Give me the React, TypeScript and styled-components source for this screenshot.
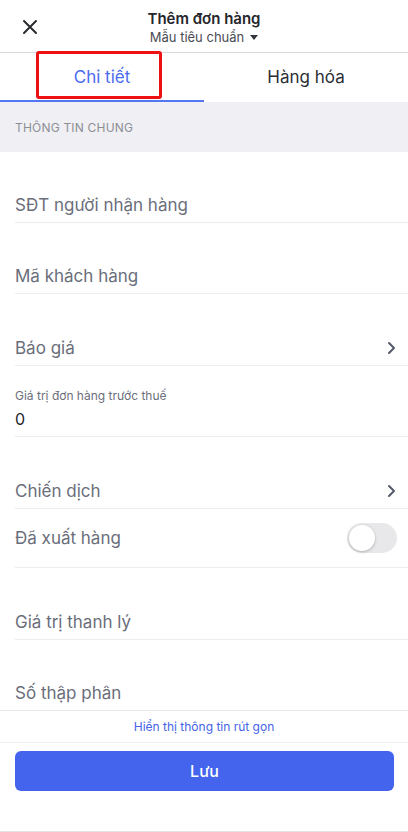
import styled, { createGlobalStyle } from "styled-components";

const Global = createGlobalStyle`
  html, body {
    margin: 0;
    padding: 0;
    background: #fff;
  }
  body {
    font-family: Inter, "Noto Sans", "Liberation Sans", sans-serif;
    -webkit-font-smoothing: antialiased;
  }
  * { box-sizing: border-box; }
`;

const Screen = styled.div`
  width: 408px;
  height: 832px;
  display: flex;
  flex-direction: column;
  background: #fff;
  overflow: hidden;
`;

const Header = styled.div`
  height: 53px;
  flex-shrink: 0;
  display: grid;
  grid-template-columns: 60px 1fr 60px;
  align-items: center;
  border-bottom: 1px solid #d9d9de;
`;

const CloseBtn = styled.div`
  display: flex;
  align-items: center;
  justify-content: center;
  padding-right: 1px;
  padding-top: 1px;
`;

const TitleBox = styled.div`
  display: flex;
  flex-direction: column;
  align-items: center;
  gap: 1px;
  padding-top: 1px;
`;

const Title = styled.div`
  font-size: 15px;
  font-weight: 600;
  color: #25262b;
  line-height: 19px;
`;

const Subtitle = styled.div`
  font-size: 13px;
  color: #4a4c54;
  line-height: 16px;
  display: flex;
  align-items: center;
  gap: 6px;
`;

const Caret = styled.span`
  width: 0;
  height: 0;
  border-left: 4px solid transparent;
  border-right: 4px solid transparent;
  border-top: 5px solid #33353c;
  margin-top: 1px;
`;

const Tabs = styled.div`
  height: 49px;
  flex-shrink: 0;
  display: grid;
  grid-template-columns: 1fr 1fr;
`;

const Tab = styled.div<{ active?: boolean }>`
  display: flex;
  align-items: center;
  justify-content: center;
  font-size: 17px;
  color: ${(p) => (p.active ? "#4a6cf0" : "#2c2e35")};
  border-bottom: 2px solid ${(p) => (p.active ? "#5576f2" : "transparent")};
  position: relative;
  padding-top: 1px;
`;

const Highlight = styled.div`
  position: absolute;
  left: 36px;
  top: -2px;
  width: 126px;
  height: 48px;
  border: 3px solid #ee1111;
  border-radius: 3px;
`;

const SectionHead = styled.div`
  height: 50px;
  flex-shrink: 0;
  background: #f0f0f4;
  display: flex;
  align-items: center;
  padding-left: 15px;
  font-size: 12px;
  color: #8c8e96;
  letter-spacing: 0.2px;
`;

const List = styled.div`
  flex: 1;
  display: flex;
  flex-direction: column;
  padding-left: 15px;
  overflow: hidden;
`;

const Row = styled.div<{ h?: number; center?: boolean }>`
  height: ${(p) => p.h ?? 71}px;
  flex-shrink: 0;
  display: flex;
  align-items: ${(p) => (p.center ? "center" : "flex-end")};
  justify-content: space-between;
  padding-bottom: ${(p) => (p.center ? 0 : 6)}px;
  padding-right: 12px;
  border-bottom: 1px solid #ececf0;
`;

const Line = styled.div`
  flex: 1;
  display: flex;
  align-items: center;
  justify-content: space-between;
`;

const Label = styled.div`
  font-size: 17px;
  color: #6a6e7a;
  line-height: 22px;
`;

const Stack = styled.div`
  display: flex;
  flex-direction: column;
  gap: 5px;
  padding-bottom: 1px;
`;

const SmallLabel = styled.div`
  font-size: 12px;
  color: #6c6f7b;
  line-height: 16px;
`;

const Value = styled.div`
  font-size: 16px;
  color: #24262c;
  line-height: 20px;
`;

const Toggle = styled.div`
  width: 50px;
  height: 30px;
  border-radius: 15px;
  background: #e8e8eb;
  display: flex;
  align-items: center;
  padding: 2px;
  margin-right: -1px;
`;

const Knob = styled.div`
  width: 26px;
  height: 26px;
  border-radius: 50%;
  background: #fff;
  box-shadow: 0 1px 3px rgba(0, 0, 0, 0.25);
`;

const Footer = styled.div`
  flex-shrink: 0;
  border-top: 1px solid #e6e6ea;
  display: flex;
  flex-direction: column;
`;

const LinkRow = styled.div`
  height: 32px;
  display: flex;
  align-items: center;
  justify-content: center;
  font-size: 12px;
  color: #4563e6;
  border-bottom: 1px solid #f0f0f3;
`;

const SaveArea = styled.div`
  height: 89px;
  padding: 8px 14px 0 15px;
  border-bottom: 1px solid #e3e3e7;
`;

const SaveButton = styled.button`
  width: 100%;
  height: 40px;
  border: none;
  border-radius: 6px;
  background: #4464ee;
  color: #fff;
  font-family: inherit;
  font-size: 16px;
  font-weight: 500;
`;

const Chevron = () => (
  <svg width="10" height="14" viewBox="0 0 10 14">
    <path
      d="M3 2 L8 7 L3 12"
      fill="none"
      stroke="#555a68"
      strokeWidth="2"
      strokeLinecap="round"
      strokeLinejoin="round"
    />
  </svg>
);

const CloseIcon = () => (
  <svg width="16" height="16" viewBox="0 0 16 16">
    <path
      d="M2 2 L14 14 M14 2 L2 14"
      stroke="#2a2b30"
      strokeWidth="2"
      strokeLinecap="round"
    />
  </svg>
);

export default function App() {
  return (
    <Screen>
      <Global />
      <Header>
        <CloseBtn>
          <CloseIcon />
        </CloseBtn>
        <TitleBox>
          <Title>Thêm đơn hàng</Title>
          <Subtitle>
            Mẫu tiêu chuẩn <Caret />
          </Subtitle>
        </TitleBox>
        <div />
      </Header>
      <Tabs>
        <Tab active>
          <Highlight />
          Chi tiết
        </Tab>
        <Tab>Hàng hóa</Tab>
      </Tabs>
      <SectionHead>THÔNG TIN CHUNG</SectionHead>
      <List>
        <Row h={71}>
          <Label>SĐT người nhận hàng</Label>
        </Row>
        <Row h={71}>
          <Label>Mã khách hàng</Label>
        </Row>
        <Row h={72}>
          <Line>
            <Label>Báo giá</Label>
            <Chevron />
          </Line>
        </Row>
        <Row h={71}>
          <Stack>
            <SmallLabel>Giá trị đơn hàng trước thuế</SmallLabel>
            <Value>0</Value>
          </Stack>
        </Row>
        <Row h={72}>
          <Line>
            <Label>Chiến dịch</Label>
            <Chevron />
          </Line>
        </Row>
        <Row h={59} center>
          <Label>Đã xuất hàng</Label>
          <Toggle>
            <Knob />
          </Toggle>
        </Row>
        <Row h={72}>
          <Label>Giá trị thanh lý</Label>
        </Row>
        <Row h={71}>
          <Label>Số thập phân</Label>
        </Row>
      </List>
      <Footer>
        <LinkRow>Hiển thị thông tin rút gọn</LinkRow>
        <SaveArea>
          <SaveButton>Lưu</SaveButton>
        </SaveArea>
      </Footer>
    </Screen>
  );
}
